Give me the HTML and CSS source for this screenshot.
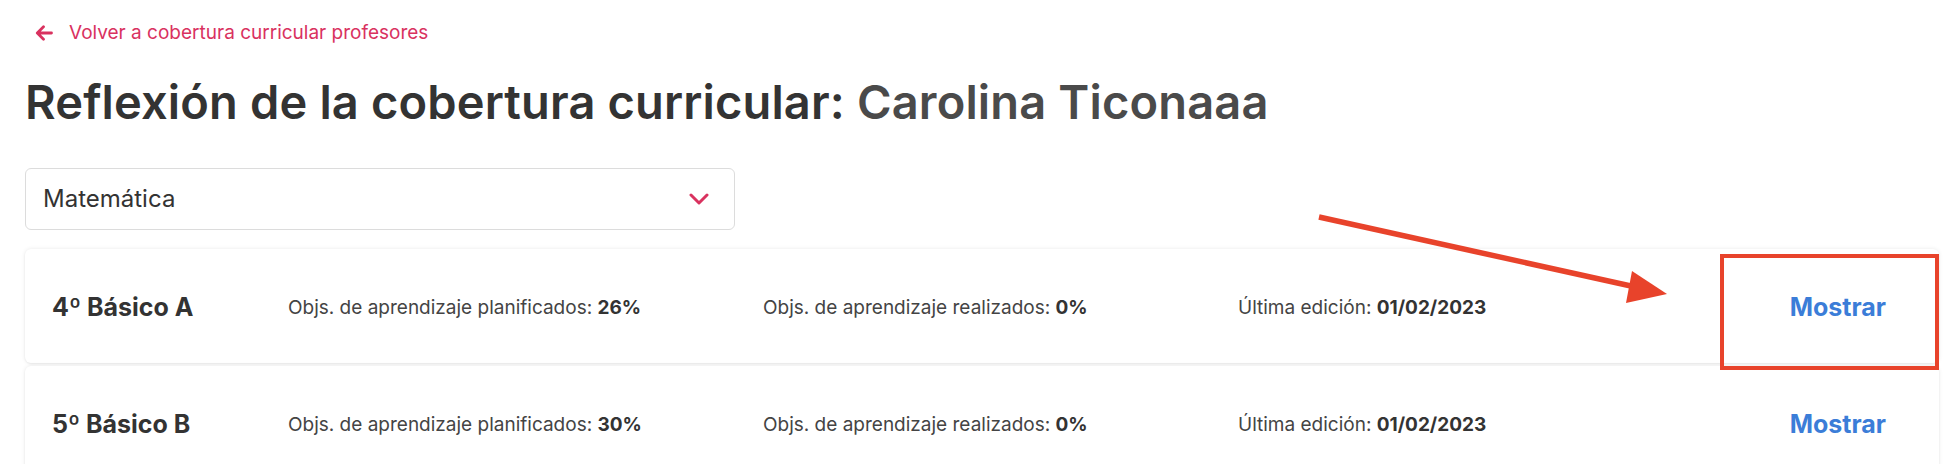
FILE: index.html
```html
<!DOCTYPE html>
<html lang="es">
<head>
<meta charset="utf-8">
<title>Reflexión de la cobertura curricular</title>
<link rel="stylesheet" href="styles.css">
</head>
<body>
<div class="page">
  <a class="back" href="#">
    <svg class="back-icon" width="18" height="16" viewBox="0 0 18 16" aria-hidden="true">
      <path d="M16.5 8H2.5M8.5 1.8L2.3 8l6.2 6.2" fill="none" stroke="currentColor" stroke-width="2.8" stroke-linecap="round" stroke-linejoin="round"/>
    </svg>
    <span>Volver a cobertura curricular profesores</span>
  </a>

  <h1 class="title">Reflexión de la cobertura curricular: <span class="title-name">Carolina Ticonaaa</span></h1>

  <div class="select">
    <span class="select-value">Matemática</span>
    <svg class="select-chevron" width="20" height="12" viewBox="0 0 20 12" aria-hidden="true">
      <path d="M2 2l8 8 8-8" fill="none" stroke="currentColor" stroke-width="3" stroke-linecap="round" stroke-linejoin="round"/>
    </svg>
  </div>

  <div class="list">
    <div class="card">
      <div class="card-name">4º Básico A</div>
      <div class="card-stat">Objs. de aprendizaje planificados: <b>26%</b></div>
      <div class="card-stat">Objs. de aprendizaje realizados: <b>0%</b></div>
      <div class="card-stat">Última edición: <b>01/02/2023</b></div>
      <a class="card-action" href="#">Mostrar</a>
    </div>
    <div class="card">
      <div class="card-name">5º Básico B</div>
      <div class="card-stat">Objs. de aprendizaje planificados: <b>30%</b></div>
      <div class="card-stat">Objs. de aprendizaje realizados: <b>0%</b></div>
      <div class="card-stat">Última edición: <b>01/02/2023</b></div>
      <a class="card-action" href="#">Mostrar</a>
    </div>
  </div>
</div>

<div class="annot-box"></div>
<svg class="annot-arrow" width="1946" height="464" viewBox="0 0 1946 464" aria-hidden="true">
  <line x1="1319" y1="217" x2="1640" y2="288" stroke="#e8432b" stroke-width="5.5"/>
  <polygon points="1667,294 1632,271 1626,303" fill="#e8432b"/>
</svg>
</body>
</html>
```
FILE: styles.css
```css
* { box-sizing: border-box; }

html, body {
  margin: 0;
  padding: 0;
  background: #ffffff;
}

body {
  font-family: Inter, "Noto Sans", "Liberation Sans", sans-serif;
  color: #333333;
}

.page {
  padding: 21px 7px 0 25px;
}

.back {
  display: inline-flex;
  align-items: center;
  gap: 16px;
  margin-left: 10px;
  color: #d9325f;
  text-decoration: none;
  font-size: 19px;
  line-height: 23px;
}

.back-icon { display: block; }

.title {
  margin: 28px 0 0;
  font-size: 47px;
  line-height: 57px;
  font-weight: 600;
  letter-spacing: 0.15px;
  color: #333333;
}

.title-name {
  color: #4a4a4a;
}

.select {
  margin-top: 38px;
  width: 710px;
  height: 62px;
  border: 1px solid #dcdcdc;
  border-radius: 6px;
  display: flex;
  align-items: center;
  justify-content: space-between;
  padding: 0 25px 0 17px;
}

.select-value {
  font-size: 24px;
  color: #333333;
}

.select-chevron {
  display: block;
  color: #d9325f;
}

.list {
  margin-top: 19px;
  display: flex;
  flex-direction: column;
  gap: 3px;
}

.card {
  height: 114px;
  background: #ffffff;
  border-radius: 6px;
  box-shadow: 0 0 4px rgba(0, 0, 0, 0.09), 0 1px 2px rgba(0, 0, 0, 0.05);
  display: grid;
  grid-template-columns: 236px 475px 475px 1fr auto;
  align-items: center;
  padding: 3px 53px 0 27px;
}

.card-name {
  font-size: 25px;
  font-weight: 700;
  color: #333333;
}

.card-stat {
  font-size: 19px;
  color: #444444;
}

.card-stat b {
  font-weight: 700;
  color: #333333;
}

.card-action {
  font-size: 25px;
  font-weight: 700;
  color: #3b7dd8;
  text-decoration: none;
}

.annot-box {
  position: absolute;
  left: 1720px;
  top: 254px;
  width: 219px;
  height: 116px;
  border: 4px solid #e8432b;
}

.annot-arrow {
  position: absolute;
  left: 0;
  top: 0;
  pointer-events: none;
}
```
